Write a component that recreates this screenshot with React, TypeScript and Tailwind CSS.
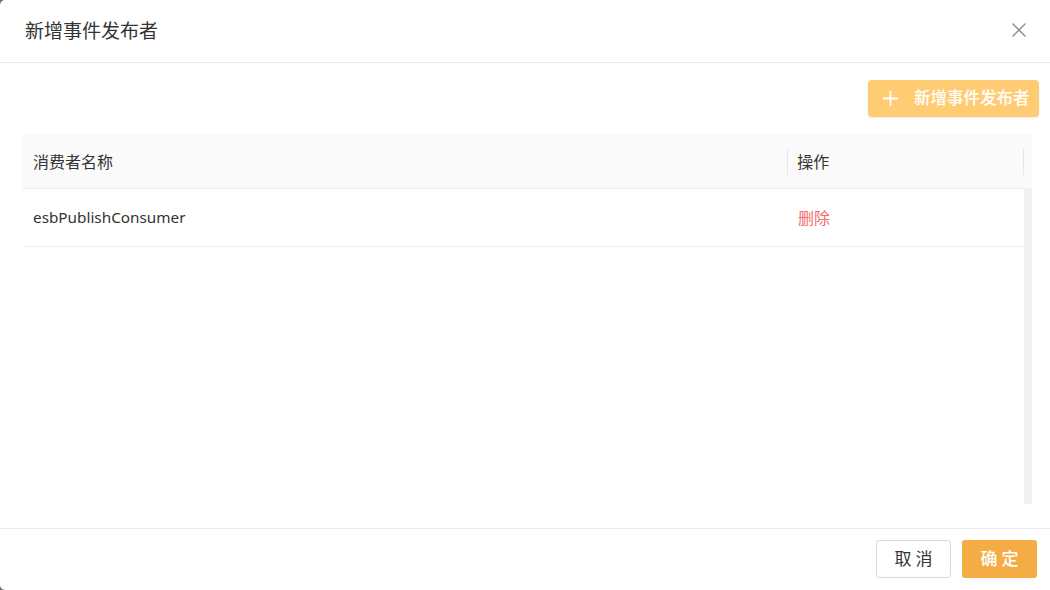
import React from 'react';

const rows = [{ name: 'esbPublishConsumer' }];

export default function App() {
  return (
    <div
      className="w-[1050px] h-[590px] bg-[#6b6b6b] overflow-hidden"
      style={{ fontFamily: '"Noto Sans", "Noto Sans CJK SC", sans-serif' }}
    >
      <div className="w-[1054px] h-[590px] bg-white rounded-[5px] flex flex-col">
        {/* Header */}
        <div className="h-[63px] shrink-0 flex items-center justify-between pl-[25px] pr-[23px] border-b border-[#ececec]">
          <h2 className="text-[19px] text-[#333] leading-none">新增事件发布者</h2>
          <svg width="16" height="16" viewBox="0 0 16 16" className="mr-[4px] -mt-[2px]">
            <path d="M1.5 1.5 L14.5 14.5 M14.5 1.5 L1.5 14.5" stroke="#8c8c8c" strokeWidth="1.4" fill="none" />
          </svg>
        </div>

        {/* Body */}
        <div className="flex-1 flex flex-col pl-[23px] pr-[22px]">
          <div className="flex justify-end pt-[17px] pb-[18px] -mr-[7px]">
            <button className="h-[37px] w-[171px] rounded-[4px] bg-[#ffcc73] text-white flex items-center pl-[14px] gap-[15px] shadow-[0_1px_2px_rgba(0,0,0,0.08)]">
              <svg width="17" height="17" viewBox="0 0 17 17">
                <path d="M8.5 1 V16 M1 8.5 H16" stroke="white" strokeWidth="1.8" fill="none" />
              </svg>
              <span className="text-[16.5px] font-medium leading-none">新增事件发布者</span>
            </button>
          </div>

          {/* Table */}
          <div className="w-[1009px]">
            <div className="h-[54px] bg-[#fafafa] flex items-center border-b border-[#efefef] text-[16px] text-[#333]">
              <div className="w-[765px] pl-[10px]">消费者名称</div>
              <div className="w-px h-[26px] bg-[#e6e6e6]" />
              <div className="w-[235px] pl-[9px]">操作</div>
              <div className="w-px h-[26px] bg-[#e6e6e6]" />
              <div className="w-[8px]" />
            </div>
            <div className="flex h-[315px]">
              <div className="flex-1">
                {rows.map((r) => (
                  <div key={r.name} className="h-[58px] flex items-center border-b border-[#efefef] text-[16px]">
                    <div className="w-[766px] pl-[10px] text-[#333] text-[15.3px]">{r.name}</div>
                    <div className="pl-[9px] text-[#f46c6c]">删除</div>
                  </div>
                ))}
              </div>
              <div className="w-[8px] bg-[#f1f1f1] rounded-b-[2px]" />
            </div>
          </div>
        </div>

        {/* Footer */}
        <div className="h-[62px] shrink-0 border-t border-[#ececec] flex items-center justify-end gap-[11px] pr-[17px] pb-[1px]">
          <button className="h-[38px] w-[75px] rounded-[3px] border border-[#d9d9d9] bg-white text-[17px] text-[#333] tracking-[4px] pl-[4px]">
            取消
          </button>
          <button className="h-[38px] w-[75px] rounded-[3px] bg-[#f4ad45] text-[17px] text-white font-medium tracking-[4px] pl-[4px]">
            确定
          </button>
        </div>
      </div>
    </div>
  );
}
